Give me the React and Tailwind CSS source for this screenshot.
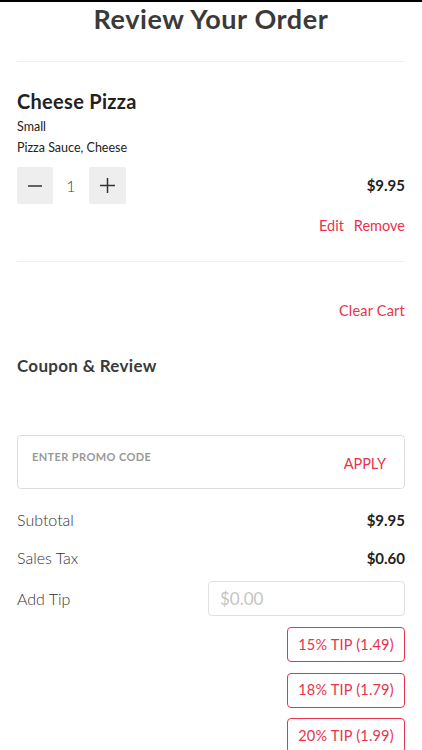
import { useState } from 'react';

const font = { fontFamily: 'Lato, "Open Sans", sans-serif' };

const tips = [
    { pct: 15, amount: '1.49' },
    { pct: 18, amount: '1.79' },
    { pct: 20, amount: '1.99' },
];

const App = () => {
    const [qty, setQty] = useState(1);

    return (
        <div className="min-h-[750px] bg-white border-t-2 border-black text-[#333]" style={font}>
            {/* Header */}
            <h1 className="text-center text-[27px] font-bold text-[#3a3a3a] leading-[32px] tracking-[0.6px] pt-[1px]">
                Review Your Order
            </h1>

            <div className="px-[17px]">
                <div className="h-px bg-[#f0f0f0] mt-[26px]" />

                {/* Cart item */}
                <div className="pt-[27px]">
                    <h2 className="text-[20px] font-bold text-[#222] leading-[24px] tracking-[0.3px]">Cheese Pizza</h2>
                    <p className="text-[12.5px] text-[#222] mt-[7px] leading-[14px]">Small</p>
                    <p className="text-[12.5px] text-[#222] mt-[7px] leading-[14px]">Pizza Sauce, Cheese</p>

                    <div className="flex items-center justify-between mt-[12px]">
                        <div className="flex items-center">
                            <button
                                onClick={() => setQty(Math.max(1, qty - 1))}
                                className="w-[36px] h-[37px] bg-[#eeeeee] rounded-[2px] flex items-center justify-center"
                            >
                                <svg width="14" height="14" viewBox="0 0 14 14"><path d="M0 7h14" stroke="#333" strokeWidth="1.5" /></svg>
                            </button>
                            <span className="w-[36px] text-center text-[16px] text-[#444] font-light">{qty}</span>
                            <button
                                onClick={() => setQty(qty + 1)}
                                className="w-[37px] h-[37px] bg-[#eeeeee] rounded-[2px] flex items-center justify-center"
                            >
                                <svg width="15" height="15" viewBox="0 0 15 15"><path d="M0 7.5h15M7.5 0v15" stroke="#333" strokeWidth="1.5" /></svg>
                            </button>
                        </div>
                        <span className="text-[15px] font-bold text-[#222]">$9.95</span>
                    </div>

                    <div className="flex justify-end gap-[10px] mt-[13px] text-[14.5px] text-[#e8334d] leading-[18px]">
                        <button>Edit</button>
                        <button>Remove</button>
                    </div>
                </div>

                <div className="h-px bg-[#f0f0f0] mt-[26px]" />

                <div className="flex justify-end mt-[40px]">
                    <button className="text-[14.5px] text-[#e8334d] leading-[18px] tracking-[0.2px]">Clear Cart</button>
                </div>

                {/* Coupon */}
                <h3 className="text-[17px] font-bold text-[#3a3a3a] leading-[22px] mt-[35px] tracking-[0.3px]">Coupon &amp; Review</h3>

                <div className="mt-[58px] h-[54px] border border-[#dddddd] rounded-[4px] flex justify-between pl-[14px] pr-[18px]">
                    <span className="text-[11px] font-bold text-[#999] tracking-[0.4px] mt-[13px]">ENTER PROMO CODE</span>
                    <button className="text-[14.5px] text-[#e8334d] self-center mt-[3px]">APPLY</button>
                </div>

                {/* Totals */}
                <div className="flex justify-between items-center mt-[21px] h-[20px]">
                    <span className="text-[16px] text-[#333] font-light">Subtotal</span>
                    <span className="text-[15px] font-bold text-[#222]">$9.95</span>
                </div>
                <div className="flex justify-between items-center mt-[18px] h-[20px]">
                    <span className="text-[16px] text-[#333] font-light">Sales Tax</span>
                    <span className="text-[15px] font-bold text-[#222]">$0.60</span>
                </div>
                <div className="flex justify-between items-center mt-[13px]">
                    <span className="text-[16px] text-[#333] font-light">Add Tip</span>
                    <input
                        placeholder="$0.00"
                        className="w-[197px] h-[35px] border border-[#e0e0e0] rounded-[4px] px-[11px] text-[17px] placeholder-[#c4c4c4] outline-none"
                    />
                </div>

                <div className="flex flex-col items-end gap-[10.5px] mt-[11px]">
                    {tips.map((t) => (
                        <button
                            key={t.pct}
                            className="w-[118px] h-[35px] border border-[#e8334d] rounded-[4px] text-[14.5px] text-[#e8334d] tracking-[0.2px]"
                        >
                            {t.pct}% TIP ({t.amount})
                        </button>
                    ))}
                </div>
            </div>
        </div>
    );
};

export default App;
